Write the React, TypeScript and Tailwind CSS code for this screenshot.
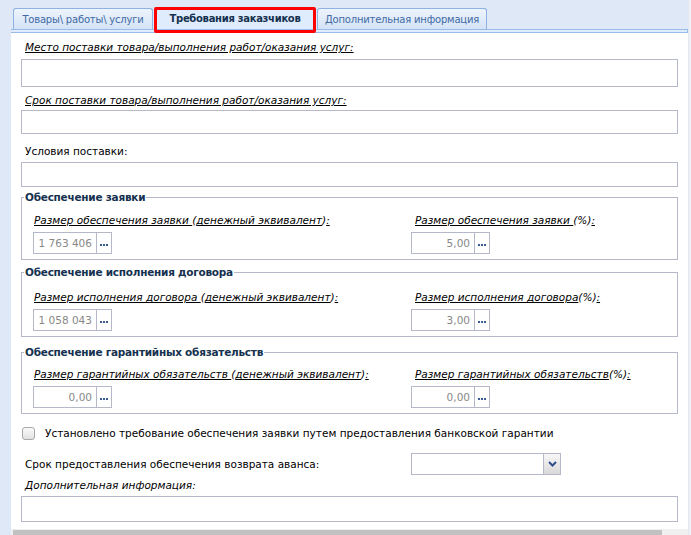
import React from "react";

const font = "font-['DejaVu_Sans',sans-serif]";

function Dots() {
  return (
    <div className="flex gap-[1px] items-end pt-[4px]">
      <div className="w-[2px] h-[2px] bg-[#3b5d96]" />
      <div className="w-[2px] h-[2px] bg-[#3b5d96]" />
      <div className="w-[2px] h-[2px] bg-[#3b5d96]" />
    </div>
  );
}

function NumField({ value }: { value: string }) {
  return (
    <div className="flex h-[22px]">
      <div className="w-[64px] border border-[#b5b8c8] bg-white text-[#888888] flex items-center justify-end pr-[4px]">
        {value}
      </div>
      <div className="w-[15px] border border-l-0 border-[#b5b8c8] bg-white flex items-center justify-center">
        <Dots />
      </div>
    </div>
  );
}

function Group({
  title,
  l1,
  v1,
  l2,
  v2,
  top,
  gap,
}: {
  title: string;
  l1: React.ReactNode;
  v1: string;
  l2: React.ReactNode;
  v2: string;
  top: string;
  gap: string;
}) {
  return (
    <fieldset className={`border border-[#b5b8c8] pl-[11px] pr-[10px] pb-[5px] ${top}`}>
      <legend className="ml-[-9px] px-[1px] font-bold text-[#15314f] leading-[14px] tracking-[-0.25px]">{title}</legend>
      <div className={`grid grid-cols-[378px_1fr] ${gap}`}>
        <div className="flex flex-col gap-[5px]">
          <div className="italic pl-[1px] leading-[14px]">{l1}</div>
          <NumField value={v1} />
        </div>
        <div className="flex flex-col gap-[5px]">
          <div className="italic pl-[4px] leading-[14px]">{l2}</div>
          <NumField value={v2} />
        </div>
      </div>
    </fieldset>
  );
}

const U = ({ children }: { children: React.ReactNode }) => <span className="underline">{children}</span>;

export default function App() {
  return (
    <div className={`w-[691px] h-[535px] bg-[#dfe8f6] overflow-hidden flex text-[10.5px] text-black ${font}`}>
      <div className="flex-1 flex flex-col pl-[11px] relative">
        {/* Tabs */}
        <div className="h-[29px] flex items-end pl-[2px] gap-[3px] text-[10px] tracking-[-0.2px]">
          <div className="h-[21px] w-[140px] border border-b-0 border-[#8db2e3] rounded-t-[3px] bg-gradient-to-b from-[#eef4fc] to-[#d4e3f7] text-[#416aa3] flex items-center justify-center">
            Товары\ работы\ услуги
          </div>
          <div className="h-[22px] w-[158px] border border-b-0 border-[#8db2e3] rounded-t-[3px] bg-[#deecfd] text-[#15314f] font-bold flex items-center justify-center tracking-[-0.3px]">
            Требования заказчиков
          </div>
          <div className="h-[21px] w-[170px] border border-b-0 border-[#8db2e3] rounded-t-[3px] bg-gradient-to-b from-[#eef4fc] to-[#d4e3f7] text-[#416aa3] flex items-center justify-center">
            Дополнительная информация
          </div>
        </div>
        <div className="h-[4px] border border-l-0 border-[#99bbe8] bg-[#deecfd]" />
        <div className="absolute left-[154px] top-[7px] w-[162px] h-[26px] border-[3px] border-[#ff0000] rounded-[2px]" />

        {/* Panel */}
        <div className="flex-1 bg-white px-[10px] pt-[7px] flex flex-col leading-[14px]">
          <div className="italic underline pl-[4px]">Место поставки товара/выполнения работ/оказания услуг:</div>
          <div className="h-[28px] shrink-0 border border-[#b5b8c8] mt-[5px]" />
          <div className="italic underline pl-[4px] mt-[6px]">Срок поставки товара/выполнения работ/оказания услуг:</div>
          <div className="h-[24px] shrink-0 border border-[#b5b8c8] mt-[3px]" />
          <div className="pl-[4px] mt-[10px]">Условия поставки:</div>
          <div className="h-[25px] shrink-0 border border-[#b5b8c8] mt-[4px]" />

          <Group
            top="mt-[3px]"
            gap="mt-[9px]"
            title="Обеспечение заявки"
            l1={<><U>Размер обеспечения заявки </U>(<U>денежный эквивалент</U>)<U>:</U></>}
            v1="1 763 406"
            l2={<><U>Размер обеспечения заявки </U>(%)<U>:</U></>}
            v2="5,00"
          />
          <Group
            top="mt-[5px]"
            gap="mt-[11px]"
            title="Обеспечение исполнения договора"
            l1={<><U>Размер исполнения договора </U>(<U>денежный эквивалент</U>)<U>:</U></>}
            v1="1 058 043"
            l2={<><U>Размер исполнения договора</U>(%)<U>:</U></>}
            v2="3,00"
          />
          <Group
            top="mt-[8px]"
            gap="mt-[8px]"
            title="Обеспечение гарантийных обязательств"
            l1={<><U>Размер гарантийных обязательств </U>(<U>денежный эквивалент</U>)<U>:</U></>}
            v1="0,00"
            l2={<><U>Размер гарантийных обязательств</U>(%)<U>:</U></>}
            v2="0,00"
          />

          <div className="flex items-center mt-[12px] pl-[1px]">
            <div className="w-[13px] h-[13px] shrink-0 rounded-[3px] border border-[#a8a8a8] bg-gradient-to-b from-[#fafafa] to-[#e2e2e2]" />
            <span className="ml-[10px]">Установлено требование обеспечения заявки путем предоставления банковской гарантии</span>
          </div>

          <div className="grid grid-cols-[390px_1fr] items-center mt-[13px]">
            <div className="pl-[4px]">Срок предоставления обеспечения возврата аванса:</div>
            <div className="flex h-[22px] w-[150px] border border-[#b5b8c8]">
              <div className="flex-1 bg-white" />
              <div className="w-[17px] border-l border-[#b5b8c8] bg-gradient-to-b from-[#f7f7f7] to-[#d9d9d9] flex items-center justify-center">
                <svg width="9" height="6" viewBox="0 0 9 6">
                  <polyline points="1,1 4.5,4.5 8,1" fill="none" stroke="#2d4f8c" strokeWidth="2" />
                </svg>
              </div>
            </div>
          </div>

          <div className="italic pl-[4px] mt-[3px]">Дополнительная информация:</div>
          <div className="h-[26px] shrink-0 border border-[#b5b8c8] mt-[4px]" />
        </div>
        {/* horizontal scrollbar */}
        <div className="h-[6px] shrink-0 bg-[#f0f0f0] flex pl-[2px] pt-[1px]">
          <div className="w-[649px] h-[5px] bg-[#c1c1c1]" />
        </div>
      </div>
      <div className="w-[3px] bg-[#eef1f8] border-l border-[#e3e8f1]" />
    </div>
  );
}
